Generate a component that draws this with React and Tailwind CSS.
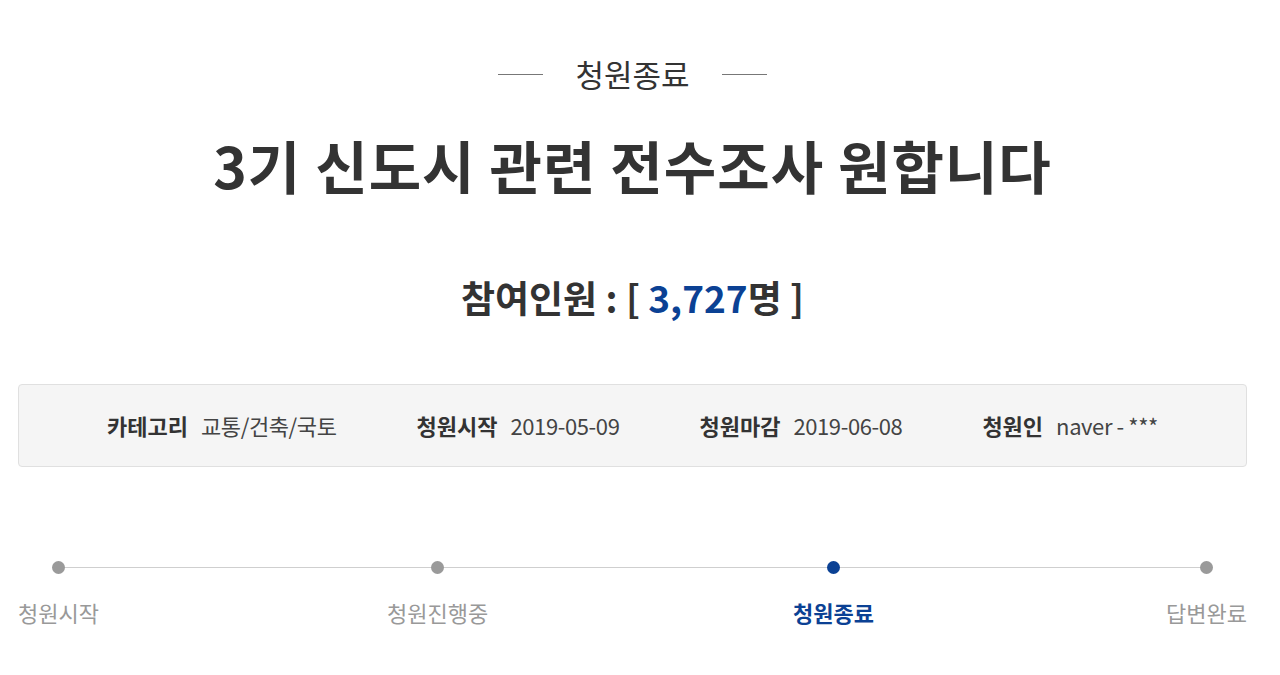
// PetitionHeader.jsx — closed petition summary block

const FONT = { fontFamily: '"Noto Sans CJK KR", "Noto Sans", sans-serif' }

const META = [
  { label: '카테고리', value: '교통/건축/국토' },
  { label: '청원시작', value: '2019-05-09' },
  { label: '청원마감', value: '2019-06-08' },
  { label: '청원인', value: 'naver - ***' },
]

// nudge = small extra margin so the dots sit where the original page puts them
const STEPS = [
  { name: '청원시작', active: false, nudge: '' },
  { name: '청원진행중', active: false, nudge: 'mr-[17px]' },
  { name: '청원종료', active: true, nudge: 'mr-[4px]' },
  { name: '답변완료', active: false, nudge: '' },
]

export default function App() {
  return (
    <div className="min-h-[675px] bg-white text-[#333]" style={FONT}>
      <div className="pl-[18px] pr-[33px] pt-[54px]">
        {/* status label */}
        <div className="flex items-center justify-center gap-8">
          <span className="h-px w-[45px] bg-[#777]" />
          <span className="text-[31px] leading-[40px] text-[#333]">청원종료</span>
          <span className="h-px w-[45px] bg-[#777]" />
        </div>

        <h1 className="mt-[30px] text-center text-[57px] font-bold leading-[80px] tracking-[1px] text-[#333]">
          3기 신도시 관련 전수조사 원합니다
        </h1>

        <p className="mt-[68px] text-center text-[37px] font-bold leading-[50px] text-[#333]">
          참여인원 : [ <span className="text-[#0b4194]">3,727</span>명 ]
        </p>

        {/* meta box */}
        <div className="mt-[62px] flex h-[83px] items-center justify-center gap-[80px] rounded border border-[#e0e0e0] bg-[#f5f5f5]">
          {META.map(m => (
            <div key={m.label} className="flex items-baseline gap-[13px] text-[22px]">
              <span className="font-bold text-[#333]">{m.label}</span>
              <span className="tracking-[-0.4px] text-[#444]">{m.value}</span>
            </div>
          ))}
        </div>

        {/* progress */}
        <div className="relative mt-[94px]">
          <div className="absolute left-[40px] right-[40px] top-[6px] h-px bg-[#cfcfcf]" />
          <div className="relative flex justify-between">
            {STEPS.map(s => (
              <div key={s.name} className={`flex flex-col items-center ${s.nudge}`}>
                <span className={`h-[13px] w-[13px] rounded-full ${s.active ? 'bg-[#0b4194]' : 'bg-[#9a9a9a]'}`} />
                <span className={`mt-[23px] text-[22px] leading-[30px] ${s.active ? 'font-bold text-[#0b4194]' : 'text-[#999]'}`}>
                  {s.name}
                </span>
              </div>
            ))}
          </div>
        </div>
      </div>
    </div>
  )
}
